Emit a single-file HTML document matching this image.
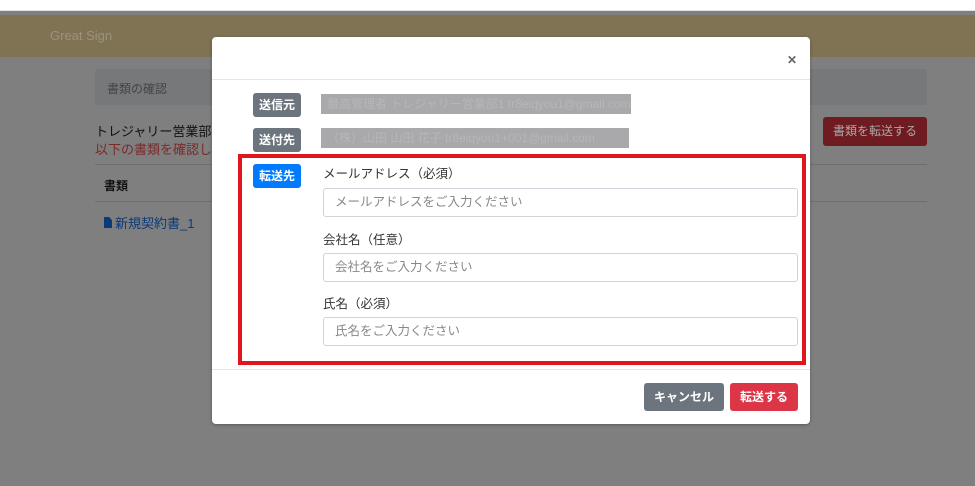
<!DOCTYPE html>
<html><head><meta charset="utf-8"><style>
*{box-sizing:border-box;margin:0;padding:0}
body{width:975px;height:486px;overflow:hidden;position:relative;background:#7f7f7f;font-family:"Liberation Sans","Noto Sans CJK JP",sans-serif;font-size:13px;color:#212529}
.abs{position:absolute}
.top{left:0;top:0;width:975px;height:11px;background:#fff;border-bottom:1px solid #e0e0e0}
.hdr{left:0;top:15px;width:975px;height:42px;background:#7f7354}
.logo{left:50px;top:28px;color:#9a9280;font-size:13px}
.card{left:95px;top:69px;width:832px;height:36px;background:#777879;border-radius:3px;color:#444;padding:11px 12px;font-size:12px}
.t1{left:95px;top:121px;color:#111}
.t2{left:95px;top:139px;color:#7a2a2a}
.line{left:95px;width:832px;height:1px;background:#6f6f6f}
.th{left:104px;top:177px;font-weight:bold;color:#111;font-size:12px}
.doc{left:104px;top:213px;color:#0a3a7a}
.fwd{left:823px;top:117px;width:104px;height:29px;background:#6e1b22;border-radius:3px;color:#aaa;font-size:12px;text-align:center;line-height:29px}
.modal{left:212px;top:37px;width:598px;height:387px;background:#fff;border-radius:4px;box-shadow:0 1px 3px rgba(0,0,0,.3)}
.x{right:13px;top:16px;font-size:12px;color:#666;font-weight:bold}
.mh{left:0;top:42px;width:598px;height:1px;background:#e5e5e5}
.mf{left:0;top:332px;width:598px;height:1px;background:#e5e5e5}
.badge{width:48px;height:24px;border-radius:3px;color:#fff;font-weight:bold;font-size:12px;text-align:center;line-height:24px}
.gray{background:#6c757d}
.blue{background:#007bff}
.fake{background:#a9a9ac;color:#b6b6b9;font-size:12px;height:20px;line-height:20px;padding-left:6px;white-space:nowrap;overflow:hidden}
.red{left:26px;top:117px;width:568px;height:211px;border:4px solid #e0161c}
.lbl{color:#333;font-size:12.5px}
.inp{width:475px;height:29px;border:1px solid #ced4da;border-radius:3px;color:#888;font-size:12.5px;padding:0 11px;line-height:26px}
.btn{height:28px;border-radius:3px;color:#fff;font-weight:bold;font-size:12px;text-align:center;line-height:28px}
</style></head><body>
<div class="abs top"></div>
<div class="abs hdr"></div>
<div class="abs logo">Great Sign</div>
<div class="abs card">書類の確認</div>
<div class="abs t1">トレジャリー営業部1</div>
<div class="abs t2">以下の書類を確認し、</div>
<div class="abs line" style="top:164px"></div>
<div class="abs th">書類</div>
<div class="abs line" style="top:201px"></div>
<div class="abs doc"><span style="display:inline-block;width:8px;height:11px;background:#0a3a7a;margin-right:3px;clip-path:polygon(0 0,65% 0,100% 30%,100% 100%,0 100%)"></span>新規契約書_1</div>
<div class="abs fwd">書類を転送する</div>
<div class="abs modal">
 <div class="abs x">✕</div>
 <div class="abs mh"></div>
 <div class="abs badge gray" style="left:41px;top:56px">送信元</div>
 <div class="abs fake" style="left:109px;top:57px;width:310px">最高管理者 トレジャリー営業部1 tr8eiqyou1@gmail.com</div>
 <div class="abs badge gray" style="left:41px;top:91px">送付先</div>
 <div class="abs fake" style="left:109px;top:91px;width:308px">（株）山田 山田 花子 tr8eiqyou1+001@gmail.com</div>
 <div class="abs red"></div>
 <div class="abs badge blue" style="left:41px;top:127px">転送先</div>
 <div class="abs lbl" style="left:111px;top:126px">メールアドレス（必須）</div>
 <div class="abs inp" style="left:111px;top:151px">メールアドレスをご入力ください</div>
 <div class="abs lbl" style="left:111px;top:192px">会社名（任意）</div>
 <div class="abs inp" style="left:111px;top:216px">会社名をご入力ください</div>
 <div class="abs lbl" style="left:111px;top:256px">氏名（必須）</div>
 <div class="abs inp" style="left:111px;top:280px">氏名をご入力ください</div>
 <div class="abs mf"></div>
 <div class="abs btn" style="left:432px;top:346px;width:80px;background:#6c757d">キャンセル</div>
 <div class="abs btn" style="left:518px;top:346px;width:68px;background:#dc3545">転送する</div>
</div>
</body></html>
